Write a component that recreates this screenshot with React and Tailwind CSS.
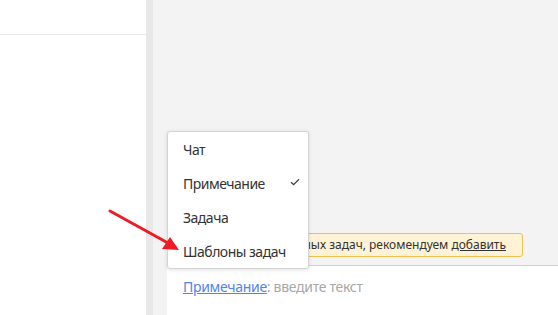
export default function App() {
  const font = { fontFamily: '"Noto Sans", "Open Sans", sans-serif' };
  return (
    <div className="relative w-[558px] h-[315px] overflow-hidden flex bg-white text-[#333]" style={font}>
      <div className="w-[146px] bg-white">
        <div className="h-[35px] border-b border-[#e8e8e8]" />
      </div>
      <div className="w-[7px] bg-[#e8e8e8]" />
      <div className="flex-1 bg-[#f3f3f3] flex flex-col justify-end">
        <div className="flex justify-end mr-[35px] mb-[8px]">
          <div className="w-[320px] h-[24px] rounded-[3px] border border-[#f0c14b] bg-[#fff2d5] flex items-center justify-end pr-[16px] overflow-hidden whitespace-nowrap text-[12px]">
            <span>У вас нет сохраненных задач, рекомендуем <span className="underline">добавить</span></span>
          </div>
        </div>
        <div className="ml-[14px] h-[50px] bg-white border-t border-[#cfcfcf] pl-[16px] pt-[11px] text-[14px] leading-[20px] tracking-[-0.3px]">
          <span className="text-[#4f86ec] underline">Примечание</span>
          <span className="text-[#a8a8a8]">: введите текст</span>
        </div>
      </div>

      <div className="absolute left-[167px] top-[131px] w-[142px] bg-white border border-[#d4d4d4] rounded-[3px] shadow-[0_1px_4px_rgba(0,0,0,0.12)] text-[14px] tracking-[-0.5px]">
        <div className="h-[34px] flex items-center pl-[15px]">Чат</div>
        <div className="h-[34px] flex items-center pl-[15px] justify-between pr-[8px]">
          <span>Примечание</span>
          <svg width="10" height="8" viewBox="0 0 10 8" className="mt-[-3px]">
            <path d="M1 4.2 L3.6 6.6 L9 1.2" fill="none" stroke="#444" strokeWidth="1.3" />
          </svg>
        </div>
        <div className="h-[34px] flex items-center pl-[15px]">Задача</div>
        <div className="h-[34px] flex items-center pl-[15px]">Шаблоны задач</div>
      </div>

      <svg className="absolute left-0 top-0" width="558" height="315" viewBox="0 0 558 315">
        <line x1="110" y1="211" x2="168" y2="243" stroke="#ee1c24" strokeWidth="3" strokeLinecap="round" />
        <polygon points="179,250 162,249 170,237" fill="#ee1c24" />
      </svg>
    </div>
  );
}
